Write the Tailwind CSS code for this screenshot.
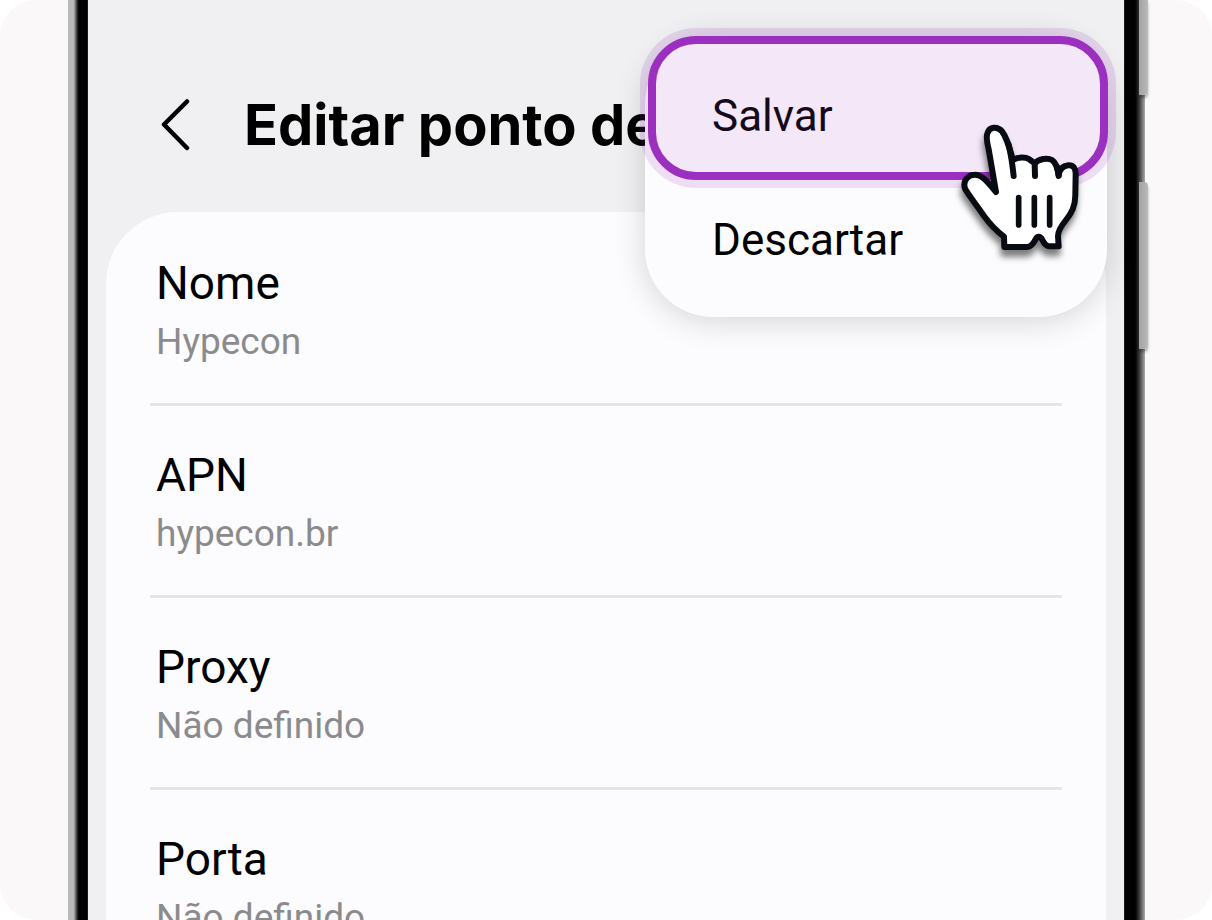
<!DOCTYPE html>
<html lang="pt-BR">
<head>
    <meta charset="utf-8">
    <meta name="viewport" content="width=device-width, initial-scale=1">
    <title>Editar ponto de acesso</title>
    <script src="https://cdn.jsdelivr.net/npm/@tailwindcss/browser@4"></script>
</head>
<body class="bg-white font-['Roboto',sans-serif] text-black">
<div class="h-screen overflow-hidden rounded-[36px] bg-[#faf8f9] pl-[68px] pr-[67px]">
    <!-- phone frame -->
    <div class="relative flex h-full">
        <div class="w-5 shrink-0 bg-linear-to-r from-[#b9b9b9] from-30% via-black via-60% to-black border-r border-[#1c1b18]"></div>

        <main class="relative min-w-0 flex-1 bg-[#f0f0f2] px-[18px]">
            <header class="flex h-[212px] items-center gap-[53px] pl-[54px] pt-[38px]">
                <button type="button" aria-label="Voltar" class="shrink-0">
                    <svg class="h-[52px] w-[31px]" viewBox="0 0 31 52" fill="none" stroke="#000" stroke-width="4.500" stroke-linecap="round" stroke-linejoin="round">
                        <path d="M27 2.500 4 25.500 27 49"/>
                    </svg>
                </button>
                <h1 class="whitespace-nowrap font-['Inter',sans-serif] text-[56px] font-bold leading-[64px]">Editar ponto de</h1>
            </header>

            <ul class="rounded-t-[72px] bg-[#fcfcfe] px-11 pt-[2px]">
                <li class="border-b-3 border-[#e5e5e7] pb-[34px] pl-[6px] pt-[37px]">
                    <div class="text-[46px] leading-[64px]">Nome</div>
                    <div class="text-[37px] leading-[54px] text-[#8b8b8d]">Hypecon</div>
                </li>
                <li class="border-b-3 border-[#e5e5e7] pb-[34px] pl-[6px] pt-[37px]">
                    <div class="text-[46px] leading-[64px]">APN</div>
                    <div class="text-[37px] leading-[54px] text-[#8b8b8d]">hypecon.br</div>
                </li>
                <li class="border-b-3 border-[#e5e5e7] pb-[34px] pl-[6px] pt-[37px]">
                    <div class="text-[46px] leading-[64px]">Proxy</div>
                    <div class="text-[37px] leading-[54px] text-[#8b8b8d]">Não definido</div>
                </li>
                <li class="border-b-3 border-[#e5e5e7] pb-[34px] pl-[6px] pt-[37px]">
                    <div class="text-[46px] leading-[64px]">Porta</div>
                    <div class="text-[37px] leading-[54px] text-[#8b8b8d]">Não definido</div>
                </li>
            </ul>

            <!-- overflow menu -->
            <div class="absolute right-[17px] top-[36px] w-[462px] rounded-[68px] bg-[#fcfcfe] shadow-[0_4px_32px_rgb(0_0_0/0.16)]">
                <button type="button" class="-mr-px ml-[3px] block h-36 w-[460px] rounded-[48px] border-8 border-[#9b30c0] bg-[#f3e7f8] pl-14 pt-4 text-left text-[44px] leading-[64px] text-[#150a1c] ring-8 ring-[#9b30c0]/15">Salvar</button>
                <button type="button" class="block h-[137px] w-full pb-[18px] pl-[67px] text-left text-[44px] leading-[64px]">Descartar</button>

                <!-- hand cursor -->
                <svg class="pointer-events-none absolute right-[7px] top-[74px] size-40 drop-shadow-[-1px_7px_3px_rgb(0_0_0/0.5)]" viewBox="0 0 480 480" fill="none" stroke="#080b12" stroke-width="18" stroke-linecap="round" stroke-linejoin="round">
                    <path fill="#fff" d="M168 246 146 118C140 94 138 82 142 70C148 50 172 48 186 64C200 82 206 106 219 150C235 140 256 140 268 148C276 153 281 158 284 160C296 146 324 143 336 150C348 158 352 172 356 196C358 180 366 168 385 166C400 165 407 176 407 190L406 255C406 290 394 310 378 330C360 352 354 365 354 378L356 409H328C318 409 310 396 306 388C300 378 292 378 288 386C280 402 272 411 262 411H193L192 380C172 365 148 340 132 318C112 288 90 262 76 238C66 214 84 194 104 194C125 193 140 212 168 246Z"/>
                    <path d="M206 104C212 130 217 160 221 198M284 160 285 198M352 172 356 198"/>
                    <path stroke-width="17" d="M236 263V345M283 263V345M329 263V345"/>
                </svg>
            </div>
        </main>

        <div class="w-[21px] shrink-0 bg-linear-to-r from-black from-45% to-[#acacac] border-l border-[#1c1b18]"></div>

        <!-- side keys -->
        <div class="absolute -right-[3px] top-0 h-[95px] w-[9px] rounded-br-[4px] bg-linear-to-r from-[#a2a2a2] to-[#bababa] shadow-[0_3px_3px_rgb(0_0_0/0.3)]"></div>
        <div class="absolute -right-[3px] top-[182px] h-[167px] w-[9px] rounded-r-[4px] bg-linear-to-r from-[#a2a2a2] to-[#bababa] shadow-[0_3px_3px_rgb(0_0_0/0.3)]"></div>
    </div>
</div>
</body>
</html>
